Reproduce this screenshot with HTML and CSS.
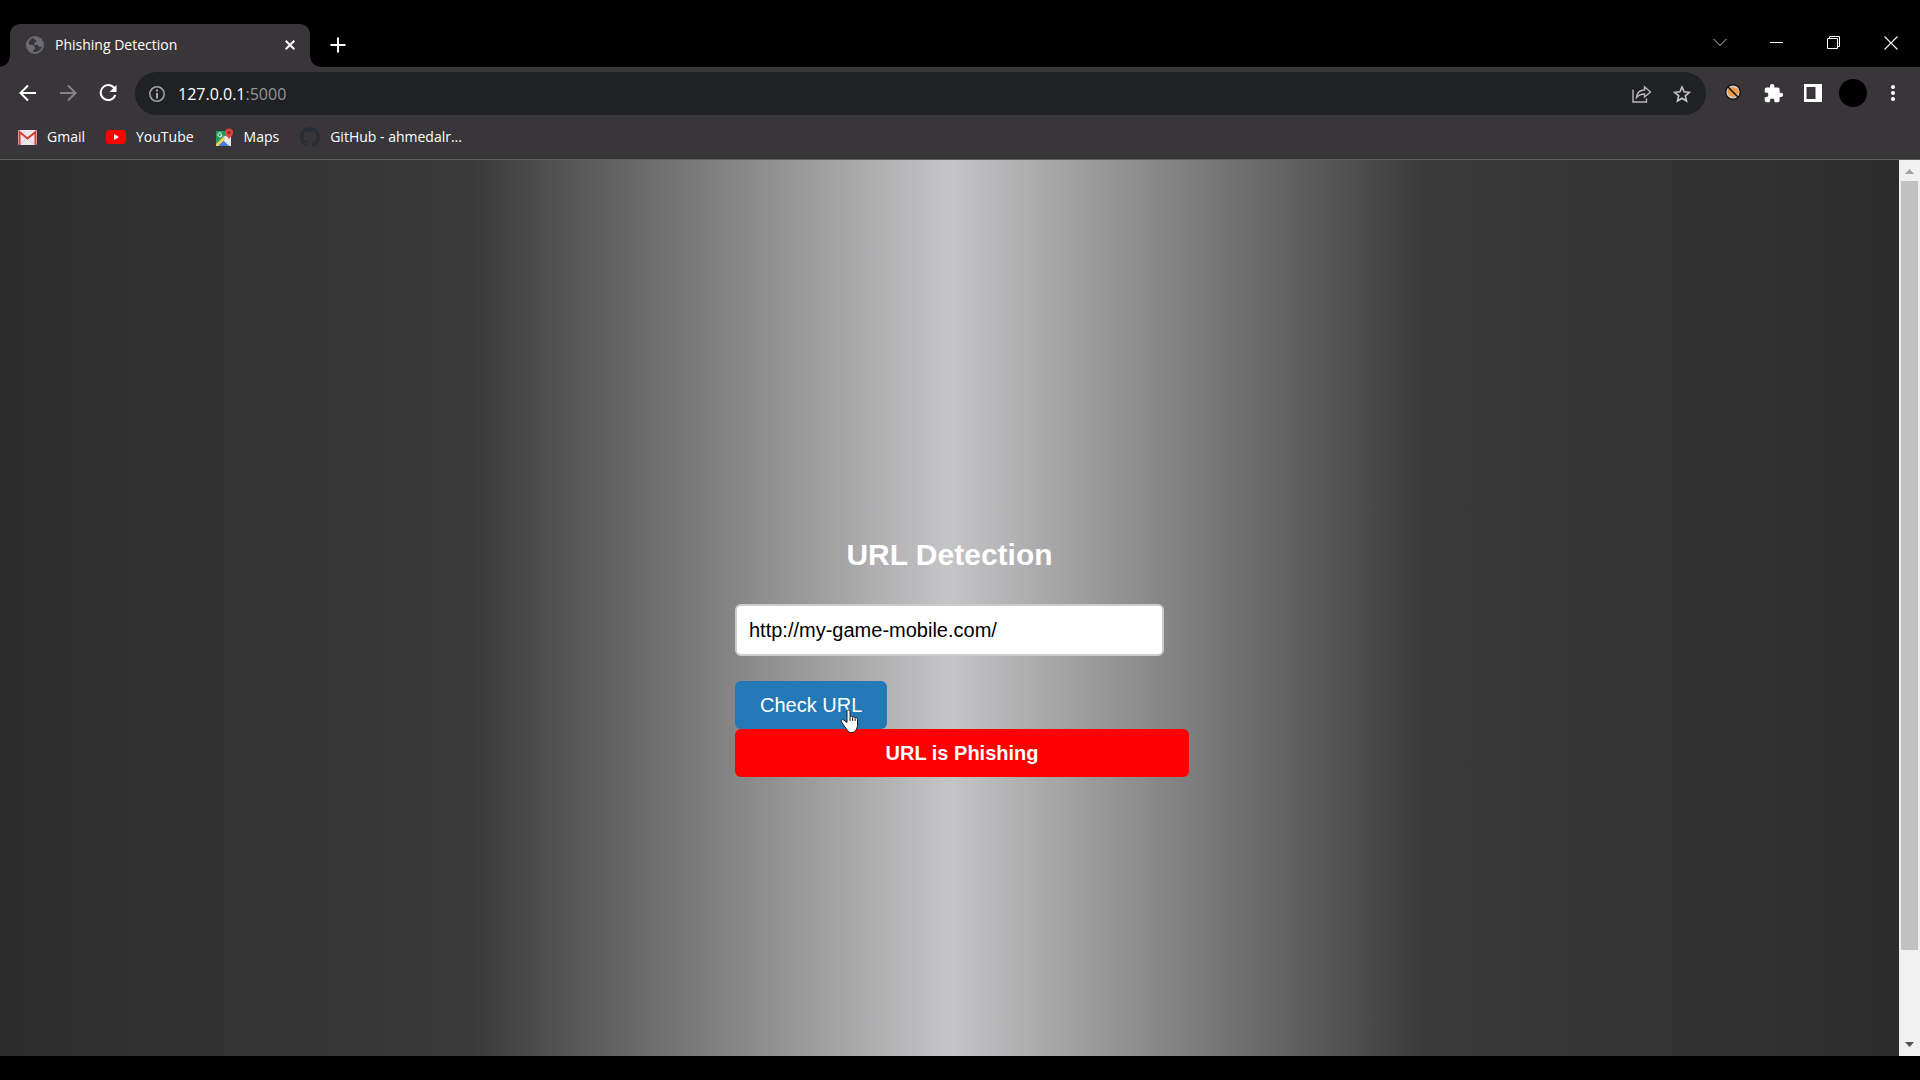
FILE: index.html
```html
<!DOCTYPE html>
<html lang="en">
<head>
<meta charset="utf-8">
<title>Phishing Detection</title>
<link rel="stylesheet" href="styles.css">
</head>
<body>
<header class="browser">
  <div class="tabstrip">
    <div class="tab">
      <svg class="tab-icon" width="18" height="18" viewBox="0 0 18 18"><circle cx="9" cy="9" r="8" fill="none" stroke="#696c74" stroke-width="2"/><path d="M2 6.5 4 9h3l2 2v2l-2 1v3C3 16 1 12 2 6.500ZM8 1.500C12 1 16 4 16.500 8L15 11h-2l-1-2H8.500L8 7l2-1V4L8 3.500Z" fill="#696c74"/></svg>
      <span class="tab-title">Phishing Detection</span>
      <button class="tab-close" aria-label="Close tab"><svg width="10" height="10" viewBox="0 0 10 10"><path d="m.7.7 8.600 8.600M9.300.7.7 9.300" stroke="#fff" stroke-width="2"/></svg></button>
    </div>
    <button class="new-tab" aria-label="New tab"><svg width="16" height="16" viewBox="0 0 16 16"><path d="M8 .5v15M.5 8h15" stroke="#fff" stroke-width="2"/></svg></button>
    <div class="window-controls">
      <button aria-label="Search tabs"><svg width="14" height="14" viewBox="0 0 14 14"><path d="m.5 3 6.500 6.500L13.500 3" fill="none" stroke="#c8c8c8"/></svg></button>
      <button aria-label="Minimize"><svg width="14" height="14" viewBox="0 0 14 14"><path d="M0 6.500h13" stroke="#fff"/></svg></button>
      <button aria-label="Restore"><svg width="14" height="14" viewBox="0 0 14 14"><path d="M.5 2.500h10v10H.5zM2.500 2.500v-2h10v10h-2" fill="none" stroke="#fff"/></svg></button>
      <button aria-label="Close"><svg width="14" height="14" viewBox="0 0 14 14"><path d="m.5.5 13 13M13.500.5l-13 13" stroke="#eee" stroke-width="1.200"/></svg></button>
    </div>
  </div>
  <div class="toolbar">
    <div class="tools">
      <button aria-label="Back"><svg width="18" height="18" viewBox="0 0 18 18"><path d="M17 9H2M9 1.500 1.500 9 9 16.500" fill="none" stroke="#fff" stroke-width="2"/></svg></button>
      <button aria-label="Forward"><svg width="18" height="18" viewBox="0 0 18 18"><path d="M1 9h15M9 1.500 16.500 9 9 16.500" fill="none" stroke="#858386" stroke-width="2"/></svg></button>
      <button aria-label="Reload"><svg width="18" height="18" viewBox="0 0 18 18"><path d="M15.500 4.500A7.500 7.500 0 1 0 16.300 11" fill="none" stroke="#fff" stroke-width="2"/><path d="M17.500 1v7h-7z" fill="#fff"/></svg></button>
    </div>
    <div class="omnibox">
      <svg width="16" height="16" viewBox="0 0 16 16"><circle cx="8" cy="8" r="7.200" fill="none" stroke="#a3a2a9" stroke-width="1.600"/><path d="M8 3.500v2M8 7v5.500" stroke="#a3a2a9" stroke-width="2"/></svg>
      <p class="address">127.0.0.1<span class="port">:5000</span></p>
      <button aria-label="Share"><svg width="20" height="18" viewBox="0 0 20 18"><path d="M1 4.500V17h13.500v-3.500" fill="none" stroke="#b8b6bb" stroke-width="1.400"/><path d="M4.500 12.500C5 8 8 5 12.500 5V1.700L18.500 7l-6 5V9C9 9 6.500 10 4.500 12.500Z" fill="none" stroke="#b8b6bb" stroke-width="1.400"/></svg></button>
      <button aria-label="Bookmark this page"><svg width="18" height="18" viewBox="0 0 18 18"><path d="m9 2 2.100 4.800 5.200.5-4 3.500 1.200 5.200L9 13.200 4.500 16l1.200-5.200-4-3.500 5.200-.5Z" fill="none" stroke="#c9c3cf" stroke-width="1.600"/></svg></button>
    </div>
    <div class="tools">
      <button class="extension" aria-label="Extension"><svg width="18" height="18" viewBox="0 0 18 18"><circle cx="9" cy="9" r="7.300" fill="#dcc9bd" stroke="#151515" stroke-width="1.400"/><path d="m4 6 4-2 6 2 1 4-4 4-5-1-2-3Z" fill="#ee9c48"/><path d="m3.800 3.800 10.400 10.400" stroke="#151515" stroke-width="1.600"/></svg></button>
      <button aria-label="Extensions"><svg width="21" height="21" viewBox="0 0 24 24"><path d="M20.500 11H19V7a2 2 0 0 0-2-2h-4V3.500a2.500 2.500 0 0 0-5 0V5H4a2 2 0 0 0-2 2v3.800h1.500a2.700 2.700 0 0 1 0 5.400H2V20a2 2 0 0 0 2 2h3.800v-1.500a2.700 2.700 0 0 1 5.400 0V22H17a2 2 0 0 0 2-2v-4h1.500a2.500 2.500 0 0 0 0-5Z" fill="#fff"/></svg></button>
      <button aria-label="Side panel"><svg width="18" height="18" viewBox="0 0 18 18"><path fill-rule="evenodd" d="M0 0h18v18H0zM2.500 3v12h9V3z" fill="#fff"/></svg></button>
      <button aria-label="Profile"><span class="avatar"></span></button>
      <button aria-label="Menu"><svg width="4" height="18" viewBox="0 0 4 18"><g fill="#fff"><circle cx="2" cy="3" r="2"/><circle cx="2" cy="9" r="2"/><circle cx="2" cy="15" r="2"/></g></svg></button>
    </div>
  </div>
  <nav class="bookmarks">
    <a href="#"><svg width="19" height="15" viewBox="0 0 19 15"><rect width="19" height="15" rx="1" fill="#e9e7e8"/><path d="M1.500 15V2l8 6.500 8-6.500v13" fill="none" stroke="#d33c35" stroke-width="2"/><path d="m3 14 5-5M16 14l-5-5" stroke="#cfcdce"/></svg>Gmail</a>
    <a href="#"><svg width="20" height="14" viewBox="0 0 20 14"><rect width="20" height="14" rx="3.500" fill="#f00"/><path d="m8 4 5 3-5 3z" fill="#fff"/></svg>YouTube</a>
    <a href="#"><svg width="19" height="19" viewBox="0 0 19 19"><path d="M1 3h15v15H1z" fill="#e9e9e9"/><path d="M1 3h13v4L1 18z" fill="#249a5b"/><path d="m8 9 8 8V8l-4-1z" fill="#e9e9e9"/><path d="m3 18 5.500-5.500L14 18z" fill="#3f7ee8"/><path d="m1 16 7-7 2 2-7 7H1z" fill="#fbd14b"/><path d="M6.500 5.500A2 2 0 1 0 7 7H5.200" fill="none" stroke="#fff"/><path d="M14 12c0-3-4-3.500-4-7.500a4 4 0 0 1 8 0c0 4-4 4.500-4 7.500Z" fill="#dc4438"/><circle cx="14" cy="4.500" r="1.500" fill="#7d2a25"/></svg>Maps</a>
    <a href="#"><svg width="20" height="20" viewBox="0 0 16 16"><path fill="#292d34" d="M8 0C3.580 0 0 3.580 0 8c0 3.540 2.290 6.530 5.470 7.590.4.070.55-.17.55-.38 0-.19-.01-.82-.01-1.490-2.010.37-2.530-.49-2.690-.94-.09-.23-.48-.94-.82-1.130-.28-.15-.68-.52-.01-.53.63-.01 1.080.58 1.230.82.72 1.210 1.870.87 2.330.66.07-.52.28-.87.51-1.070-1.780-.2-3.640-.89-3.640-3.950 0-.87.31-1.590.82-2.150-.08-.2-.36-1.020.08-2.120 0 0 .67-.21 2.200.82A7.600 7.600 0 0 1 8 3.860c.68 0 1.360.09 2 .27 1.530-1.040 2.200-.82 2.200-.82.44 1.100.16 1.920.08 2.120.51.56.82 1.270.82 2.150 0 3.070-1.870 3.750-3.650 3.950.29.25.54.73.54 1.480 0 1.070-.01 1.930-.01 2.200 0 .21.15.46.55.38A8 8 0 0 0 16 8c0-4.420-3.580-8-8-8Z"/></svg>GitHub - ahmedalr...</a>
  </nav>
</header>
<div class="viewport">
  <main class="page">
    <form class="detector">
      <h1><label for="url">URL Detection</label></h1>
      <input id="url" type="text" value="http://my-game-mobile.com/">
      <button class="check" type="button">Check URL
        <svg class="cursor" width="20" height="26" viewBox="0 0 20 26"><path d="M7 2.500c0-2 3-2 3 0v5.300c.7-.8 2.300-.6 2.600.5.800-.7 2.200-.4 2.500.6.900-.5 2.400 0 2.400 1.400V16c0 2-1 4-1.500 5-1 3-7 3.500-8.500.5L3.500 16 1.300 12.500c-.6-1.400 1.200-2.600 2.500-1.400L7 13.500Z" fill="#fff" stroke="#1a1a1a"/><path d="M10 8v4M12.600 8.500V12M15.100 9.300V12" stroke="#1a1a1a"/></svg>
      </button>
      <output class="result" for="url">URL is Phishing</output>
    </form>
  </main>
  <div class="scrollbar">
    <svg class="arrow" viewBox="0 0 21 21"><path d="M6 14h9l-4.500-5z" fill="#a3a3a3"/></svg>
    <div class="track"><div class="thumb"></div></div>
    <svg class="arrow" viewBox="0 0 21 21"><path d="M6 7h9l-4.500 5z" fill="#505050"/></svg>
  </div>
</div>
</body>
</html>
```
FILE: styles.css
```css
* { box-sizing: border-box; }

body {
  display: flex;
  flex-direction: column;
  min-height: 100vh;
  margin: 0;
  padding-bottom: 24px;
  background: #000;
  font-family: "Liberation Sans", Arial, sans-serif;
}

button {
  display: flex;
  align-items: center;
  justify-content: center;
  padding: 0;
  border: 0;
  background: none;
}

svg { flex: none; }

.browser {
  color: #fff;
  background: #393639;
  border-bottom: 1px solid #606260;
  font: 14px/20px "Open Sans", "Noto Sans", sans-serif;
}

/* Tab strip */
.tabstrip {
  display: flex;
  align-items: stretch;
  height: 67px;
  padding: 24px 1px 0 10px;
  background: #000;
}

.tab {
  position: relative;
  display: flex;
  align-items: center;
  gap: 11px;
  width: 300px;
  padding: 0 15px 2px 16px;
  background: #393639;
  border-radius: 10px 10px 0 0;
}

.tab::before,
.tab::after {
  content: "";
  position: absolute;
  bottom: 0;
  width: 10px;
  height: 10px;
}

.tab::before {
  right: 100%;
  background: radial-gradient(circle at 0 0, #000 9px, #393639 10px);
}

.tab::after {
  left: 100%;
  background: radial-gradient(circle at 100% 0, #000 9px, #393639 10px);
}

.tab-title { flex: 1; }

.new-tab {
  width: 56px;
  padding-bottom: 2px;
}

.window-controls {
  display: flex;
  margin-left: auto;
  padding-bottom: 6px;
}

.window-controls button { width: 57px; }

/* Toolbar */
.toolbar {
  display: flex;
  align-items: center;
  gap: 7px;
  padding: 5px 7px 5px 8px;
}

.tools { display: flex; }

.tools button {
  width: 40px;
  height: 42px;
  padding-bottom: 1px;
}

.tools .extension { padding-bottom: 4px; }

.avatar {
  width: 28px;
  height: 28px;
  border-radius: 50%;
  background: #000;
}

.omnibox {
  display: flex;
  flex: 1;
  align-items: center;
  height: 43px;
  padding: 0 4px 0 14px;
  border-radius: 22px;
  background: #202124;
}

.omnibox button {
  width: 40px;
  height: 40px;
}

.address {
  flex: 1;
  margin: 0 0 0 13px;
  font-size: 16px;
}

.port { color: #96969a; }

/* Bookmarks */
.bookmarks {
  display: flex;
  gap: 21px;
  padding: 7px 18px 12px;
}

.bookmarks a {
  display: flex;
  align-items: center;
  gap: 10px;
  color: #fff;
  text-decoration: none;
}

/* Page */
.viewport {
  display: flex;
  flex: 1;
}

.page {
  display: flex;
  flex: 1;
  align-items: center;
  justify-content: center;
  padding-top: 98px;
  background: linear-gradient(to right, #2c2c2d, #3a3a3a 25%, #c5c4c6 50%, #3a3a3a 75%, #2c2c2d);
}

.detector {
  width: 429px;
  font-size: 20px;
}

.detector h1 {
  margin: 0 0 31px;
  color: #fff;
  font-size: 30px;
  line-height: 36px;
  text-align: center;
}

.detector input {
  display: block;
  width: 100%;
  height: 52px;
  margin-bottom: 25px;
  padding: 0 12px;
  border: 2px solid #ccc;
  border-radius: 6px;
  background: #fff;
  color: #000;
  font: inherit;
}

.check {
  position: relative;
  height: 48px;
  padding: 0 25px;
  border-radius: 6px;
  background: #2478b5;
  color: #fff;
  font: inherit;
}

.cursor {
  position: absolute;
  right: 27px;
  bottom: -6px;
}

.result {
  display: block;
  width: 454px;
  border-radius: 6px;
  background: #f00;
  color: #fff;
  font-weight: bold;
  line-height: 48px;
  text-align: center;
}

/* Scrollbar */
.scrollbar {
  display: flex;
  flex-direction: column;
  width: 21px;
  background: #f0f0f0;
}

.arrow {
  width: 21px;
  height: 21px;
}

.track {
  flex: 1;
  padding: 0 2px;
}

.thumb {
  height: 90%;
  background: #c1c1c1;
}
```
